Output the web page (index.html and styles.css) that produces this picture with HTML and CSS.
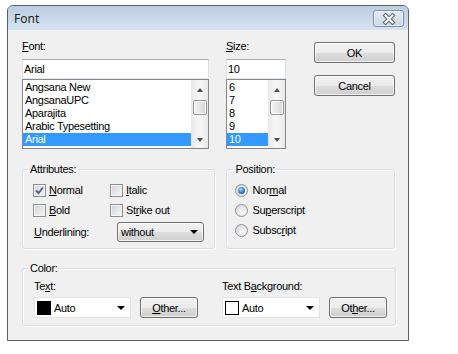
FILE: index.html
```html
<!DOCTYPE html>
<html lang="en">
<head>
    <meta charset="UTF-8">
    <title>Font</title>
    <link rel="stylesheet" href="styles.css">
</head>
<body>

<div class="dialog">
    <div class="titlebar">
        <span class="title">Font</span>
        <button class="close">
            <svg width="14" height="12" viewBox="0 0 14 12">
                <path d="M3.5 2.5 L10.5 9.5 M10.5 2.5 L3.5 9.5" stroke="#56647a" stroke-width="4.2" stroke-linecap="square" fill="none"/>
                <path d="M3.5 2.5 L10.5 9.5 M10.5 2.5 L3.5 9.5" stroke="#fff" stroke-width="2" stroke-linecap="square" fill="none"/>
            </svg>
        </button>
    </div>

    <div class="body">
        <div class="top">
            <div class="font-col">
                <span class="lbl"><u>F</u>ont:</span>
                <div class="edit">Arial</div>
                <div class="list">
                    <ul class="items">
                        <li>Angsana New</li>
                        <li>AngsanaUPC</li>
                        <li>Aparajita</li>
                        <li>Arabic Typesetting</li>
                        <li class="sel">Arial</li>
                    </ul>
                    <div class="vscroll">
                        <span class="sb-btn up"><i class="tri-up"></i></span>
                        <span class="thumb"></span>
                        <span class="sb-btn down"><i class="tri-down"></i></span>
                    </div>
                </div>
            </div>

            <div class="size-col">
                <span class="lbl"><u>S</u>ize:</span>
                <div class="edit">10</div>
                <div class="list">
                    <ul class="items">
                        <li>6</li>
                        <li>7</li>
                        <li>8</li>
                        <li>9</li>
                        <li class="sel">10</li>
                    </ul>
                    <div class="vscroll">
                        <span class="sb-btn up"><i class="tri-up"></i></span>
                        <span class="thumb"></span>
                        <span class="sb-btn down"><i class="tri-down"></i></span>
                    </div>
                </div>
            </div>

            <div class="buttons">
                <button class="btn">OK</button>
                <button class="btn">Cancel</button>
            </div>
        </div>

        <div class="groups">
            <fieldset class="group attrs">
                <legend>Attributes:</legend>
                <div class="checks">
                    <div class="check">
                        <span class="cbox">
                            <svg width="11" height="11" viewBox="0 0 11 11">
                                <path d="M2 5.5 L4.5 8 L9 2.5" stroke="#4d5f94" stroke-width="1.9" fill="none"/>
                            </svg>
                        </span>
                        <span><u>N</u>ormal</span>
                    </div>
                    <div class="check"><span class="cbox"></span><span><u>I</u>talic</span></div>
                    <div class="check"><span class="cbox"></span><span><u>B</u>old</span></div>
                    <div class="check"><span class="cbox"></span><span>St<u>r</u>ike out</span></div>
                </div>
                <div class="uline-row">
                    <span class="uline-lbl"><u>U</u>nderlining:</span>
                    <div class="combo">
                        <span>without</span>
                        <i class="tri-down big"></i>
                    </div>
                </div>
            </fieldset>

            <fieldset class="group position">
                <legend>Position:</legend>
                <div class="radio"><span class="rbox on"></span><span>Nor<u>m</u>al</span></div>
                <div class="radio"><span class="rbox"></span><span>Su<u>p</u>erscript</span></div>
                <div class="radio"><span class="rbox"></span><span>Subsc<u>r</u>ipt</span></div>
            </fieldset>
        </div>

        <fieldset class="group color">
            <legend>Color:</legend>
            <div class="color-row">
                <div class="color-field">
                    <span class="lbl">Te<u>x</u>t:</span>
                    <div class="pick">
                        <div class="ccombo">
                            <span class="swatch black"></span>
                            <span class="cname">Auto</span>
                            <i class="tri-down big"></i>
                        </div>
                        <button class="btn other"><u>O</u>ther...</button>
                    </div>
                </div>
                <div class="color-field">
                    <span class="lbl">Text B<u>a</u>ckground:</span>
                    <div class="pick">
                        <div class="ccombo wide">
                            <span class="swatch white"></span>
                            <span class="cname">Auto</span>
                            <i class="tri-down big"></i>
                        </div>
                        <button class="btn other">Ot<u>h</u>er...</button>
                    </div>
                </div>
            </div>
        </fieldset>
    </div>
</div>

</body>
</html>
```

FILE: styles.css
```css
* {
    box-sizing: border-box;
}
body {
    margin: 0;
    background: #fff;
    font-family: "Liberation Sans", Arial, sans-serif;
    font-size: 11px;
    letter-spacing: -0.3px;
    color: #000;
}
u {
    text-decoration-thickness: 1px;
    text-underline-offset: 1px;
}
.dialog {
    width: 402px;
    margin: 5px 0 0 7px;
    border: 1px solid #5b5f66;
    border-radius: 6px 6px 0 0;
    background: #f0f0f0;
}
.titlebar {
    height: 24px;
    display: flex;
    justify-content: space-between;
    align-items: flex-start;
    padding: 4px 4px 0 6px;
    border-radius: 5px 5px 0 0;
    background: linear-gradient(#bccde2, #d6e3f1);
}
.title {
    font-family: "Noto Sans", "Open Sans", sans-serif;
    font-size: 12px;
    letter-spacing: 0;
    line-height: 17px;
    color: #1e1e1e;
}
.close {
    width: 31px;
    height: 17px;
    padding: 0;
    border: 1px solid #7d8ea6;
    border-radius: 3px;
    background: linear-gradient(#e3ebf4, #cbd8e8);
    box-shadow: inset 0 0 0 1px rgba(255,255,255,0.5);
    display: flex;
    align-items: center;
    justify-content: center;
}
.body {
    padding: 10px 13px 14px 14px;
}
.lbl {
    display: block;
    line-height: 13px;
    margin-bottom: 6px;
}

/* top part: font list, size list, buttons */
.top {
    display: flex;
}
.font-col {
    width: 187px;
}
.size-col {
    width: 60px;
    margin-left: 17px;
}
.buttons {
    width: 81px;
    margin-left: 28px;
    padding-top: 2px;
    display: flex;
    flex-direction: column;
    gap: 12px;
}
.btn {
    font: inherit;
    letter-spacing: inherit;
    color: #000;
    height: 21px;
    padding: 0;
    border: 1px solid #707070;
    border-radius: 3px;
    background: linear-gradient(#f2f2f2 0%, #ebebeb 50%, #dddddd 51%, #cfcfcf 100%);
    box-shadow: inset 0 0 0 1px rgba(255,255,255,0.7);
}
.edit {
    height: 20px;
    line-height: 18px;
    padding: 0 1px;
    background: #fff;
    border: 1px solid;
    border-color: #abadb3 #dbdfe6 #e3e9ef #e2e3ea;
}
.list {
    height: 70px;
    display: flex;
    background: #fff;
    border: 1px solid #828790;
}
.items {
    flex: 1;
    list-style: none;
    margin: 0;
    padding: 1px 0 0;
}
.items li {
    height: 13px;
    line-height: 13px;
    padding-left: 2px;
    white-space: nowrap;
}
.items li.sel {
    background: #3399ff;
    color: #fff;
}
.vscroll {
    width: 17px;
    display: flex;
    flex-direction: column;
    align-items: center;
    background: linear-gradient(90deg, #e8e8e8, #f5f5f5 40%, #f5f5f5 60%, #e8e8e8);
}
.sb-btn {
    width: 17px;
    display: flex;
    justify-content: center;
}
.sb-btn.up {
    height: 20px;
    align-items: center;
}
.sb-btn.down {
    height: 17px;
    margin-top: auto;
    align-items: center;
}
.thumb {
    width: 14px;
    height: 15px;
    border: 1px solid #979797;
    border-radius: 2px;
    background: linear-gradient(90deg, #f4f4f4, #e6e6e6 50%, #d6d6d6);
    box-shadow: inset 0 0 0 1px rgba(255,255,255,0.8);
}
.tri-up, .tri-down {
    width: 0;
    height: 0;
    border-left: 3.5px solid transparent;
    border-right: 3.5px solid transparent;
}
.tri-up {
    border-bottom: 4px solid #4d4d4d;
}
.tri-down {
    border-top: 4px solid #4d4d4d;
}
.tri-down.big {
    border-top-color: #000;
    border-left-width: 4px;
    border-right-width: 4px;
}

/* group boxes */
.groups {
    display: flex;
    gap: 11px;
    margin-top: 14px;
}
.group {
    margin: 0;
    min-width: 0;
    border: 1px solid #d5dfe5;
    border-radius: 3px;
    box-shadow: inset 1px 1px 0 #fff, 1px 1px 0 #fff;
}
.group legend {
    padding: 0 2px;
    line-height: 13px;
}
.attrs {
    width: 194px;
    padding: 4px 0 6px 10px;
}
.attrs legend {
    margin-left: -5px;
}
.position {
    width: 169px;
    padding: 4px 0 6px 8px;
}
.position legend {
    margin-left: -2px;
}
.checks {
    display: grid;
    grid-template-columns: 77px auto;
    grid-auto-rows: 20px;
}
.check, .radio {
    display: flex;
    align-items: center;
    gap: 3px;
}
.radio {
    height: 20px;
    gap: 4px;
}
.cbox {
    width: 13px;
    height: 13px;
    border: 1px solid #8e8f8f;
    background: linear-gradient(135deg, #d0d3d8, #f7f7f7);
    box-shadow: inset 0 0 0 1px #f4f4f4;
    display: flex;
    align-items: center;
    justify-content: center;
}
.rbox {
    width: 13px;
    height: 13px;
    border: 1px solid #8e8f8f;
    border-radius: 50%;
    background: radial-gradient(circle at 65% 65%, #fdfdfd, #cfd1d4);
    display: flex;
    align-items: center;
    justify-content: center;
}
.rbox.on::after {
    content: "";
    width: 7px;
    height: 7px;
    border-radius: 50%;
    background: radial-gradient(circle at 40% 35%, #a9d6f7, #2a71b8 60%, #1b4c84);
}
.uline-row {
    display: flex;
    align-items: center;
    margin-top: 2px;
}
.uline-lbl {
    width: 84px;
    padding-left: 1px;
}
.combo {
    width: 87px;
    height: 20px;
    display: flex;
    align-items: center;
    justify-content: space-between;
    padding: 0 5px 0 3px;
    border: 1px solid #707070;
    border-radius: 3px;
    background: linear-gradient(#f2f2f2 0%, #ebebeb 50%, #dddddd 51%, #cfcfcf 100%);
    box-shadow: inset 0 0 0 1px rgba(255,255,255,0.7);
}

/* color */
.color {
    width: 374px;
    margin-top: 13px;
    padding: 5px 0 7px 11px;
}
.color legend {
    margin-left: -6px;
}
.color-row {
    display: flex;
    gap: 24px;
}
.color .lbl {
    margin-bottom: 4px;
}
.pick {
    display: flex;
    gap: 9px;
}
.ccombo {
    width: 97px;
    height: 21px;
    display: flex;
    align-items: center;
    padding: 0 3px 0 2px;
    background: #fff;
    border: 1px solid #e2e2e2;
}
.ccombo.wide {
    width: 98px;
}
.ccombo .tri-down {
    margin-left: auto;
    margin-right: 2px;
}
.swatch {
    width: 14px;
    height: 14px;
}
.swatch.black {
    background: #000;
}
.swatch.white {
    background: #fff;
    border: 1px solid #000;
}
.cname {
    margin-left: 3px;
}
.btn.other {
    width: 58px;
}
```
